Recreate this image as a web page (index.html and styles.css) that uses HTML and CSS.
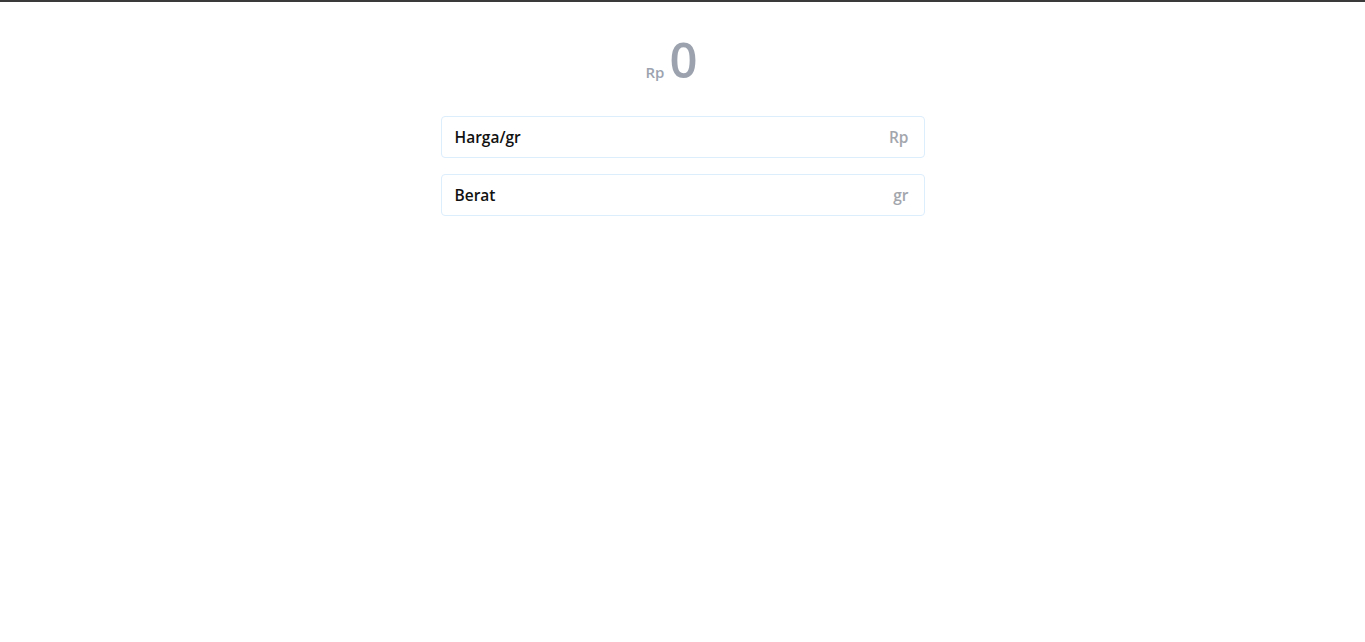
FILE: index.html
```html
<!DOCTYPE html>
<html>
<head>
<meta charset="utf-8">
<link rel="stylesheet" href="styles.css">
</head>
<body>
<div class="topbar"></div>
<main class="wrap">
  <div class="total"><span class="cur">Rp</span><span class="amount">0</span></div>
  <div class="field"><span class="label">Harga/gr</span><span class="unit">Rp</span></div>
  <div class="field"><span class="label">Berat</span><span class="unit">gr</span></div>
</main>
</body>
</html>
```
FILE: styles.css
```css
html, body { margin: 0; padding: 0; background: #fff; }
body { font-family: "Open Sans", "Noto Sans", sans-serif; }
.topbar { height: 2px; background: #3a3a3a; }
.wrap { width: 484px; margin: 0 auto; display: flex; flex-direction: column; gap: 16px; }
.total { display: flex; justify-content: center; align-items: baseline; gap: 5px; padding: 33px 22px 0 0; height: 86px; box-sizing: border-box; margin-bottom: 12px; }
.cur { font-size: 15px; font-weight: 600; color: #9ca3af; }
.amount { font-size: 49px; font-weight: 600; line-height: 1; color: #9ca3af; }
.field { height: 42px; box-sizing: border-box; border: 1px solid #dcedfc; border-radius: 4px; display: flex; align-items: center; justify-content: space-between; padding: 0 15px 0 13px; }
.label { font-size: 15.5px; font-weight: 600; color: #111; }
.unit { font-size: 15.5px; font-weight: 600; color: #a3a6ad; }
```
